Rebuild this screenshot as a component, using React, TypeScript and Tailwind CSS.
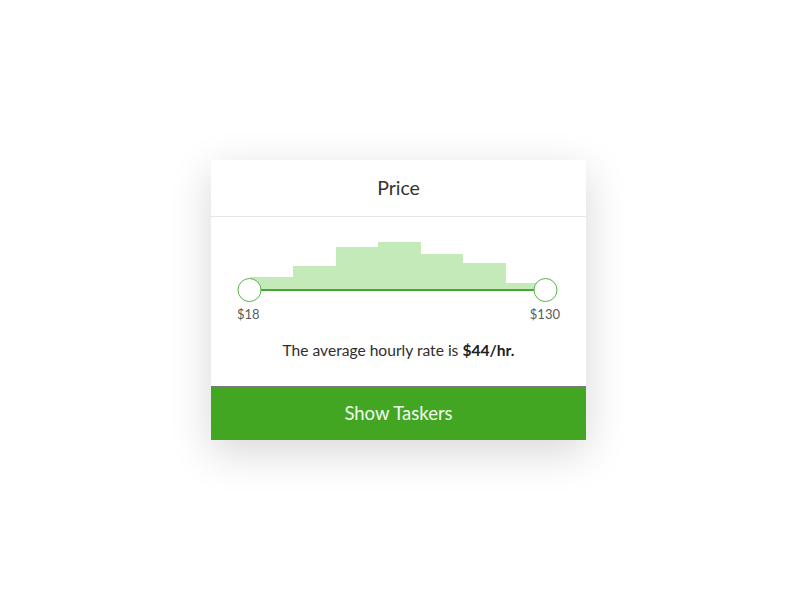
import React from "react";

const bars = [
  { x0: 13, x1: 56, top: 47 },
  { x0: 56, x1: 99, top: 36 },
  { x0: 99, x1: 141, top: 17 },
  { x0: 141, x1: 184, top: 12 },
  { x0: 184, x1: 226, top: 24 },
  { x0: 226, x1: 269, top: 33 },
  { x0: 269, x1: 308, top: 53 },
];

export default function App() {
  return (
    <div
      className="w-[800px] h-[600px] bg-white pt-[160px] pl-[211px]"
      style={{ fontFamily: "Lato, 'Open Sans', sans-serif" }}
    >
      <div className="w-[375px] bg-white shadow-[0_12px_40px_rgba(0,0,0,0.16)]">
        <div className="h-[57px] border-b border-[#e6e6e6] flex items-center justify-center text-[19.5px] text-[#333]">
          Price
        </div>
        <div className="h-[169px] px-[26px] pt-[13px] flex flex-col">
          <svg width="323" height="74" viewBox="0 0 323 74">
            {bars.map((b, i) => (
              <rect key={i} x={b.x0} y={b.top} width={b.x1 - b.x0} height={60 - b.top} fill="#c4eab9" />
            ))}
            <rect x={12.5} y={59} width={296} height={2} fill="#45a832" />
            <circle cx={12.5} cy={60} r={11.5} fill="white" stroke="#58b447" strokeWidth={1} />
            <circle cx={308.5} cy={60} r={11.5} fill="white" stroke="#58b447" strokeWidth={1} />
          </svg>
          <div className="flex justify-between text-[13px] leading-[16px] mt-[2px] text-[#5a5a5a]">
            <span>$18</span>
            <span>$130</span>
          </div>
          <div className="mt-[18px] text-center text-[15.6px] leading-[20px] text-[#2e2e2e]">
            The average hourly rate is <span className="font-bold text-[#1e1e1e]">$44/hr.</span>
          </div>
        </div>
        <div className="border-t border-[#7a7a7a] h-[54px] bg-[#42a623] flex items-center justify-center text-[18.5px] text-[#f2f9ef]">
          Show Taskers
        </div>
      </div>
    </div>
  );
}
